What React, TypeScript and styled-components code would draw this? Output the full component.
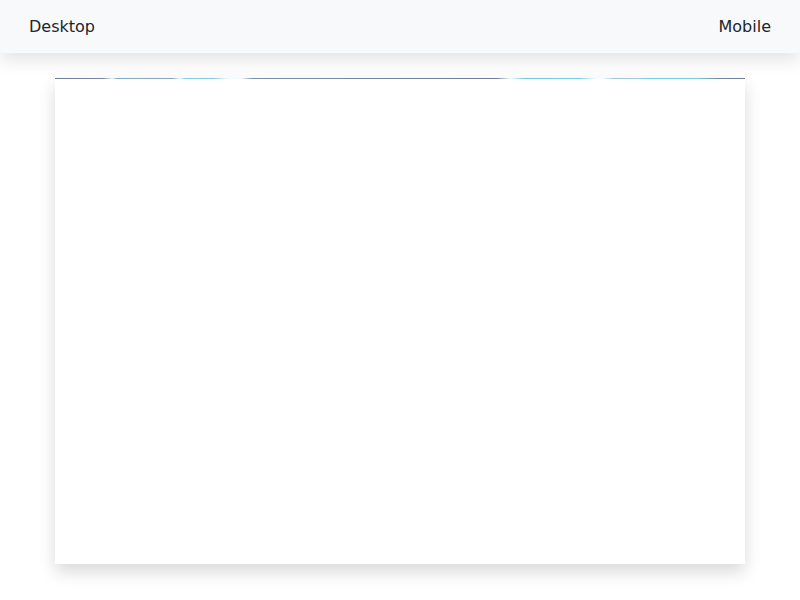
import { FC } from "react";
import styled, { createGlobalStyle } from "styled-components";

const GlobalStyle = createGlobalStyle`
    html, body {
        margin: 0;
        padding: 0;
        background: #ffffff;
        font-family: "DejaVu Sans", "Liberation Sans", sans-serif;
        color: #212529;
    }
`;

const Page = styled.div`
    display: flex;
    flex-direction: column;
    align-items: center;
    height: 600px;
    overflow: hidden;
`;

const TopBar = styled.header`
    position: relative;
    z-index: 1;
    align-self: stretch;
    flex: 0 0 53px;
    display: flex;
    justify-content: space-between;
    align-items: center;
    padding: 0 29px;
    background: #f8f9fa;
    box-shadow: 0 8px 16px rgba(0, 0, 0, 0.1);
`;

const ModeLink = styled.a`
    font-size: 16px;
    color: #212529;
    text-decoration: none;
    cursor: pointer;
`;

const Stage = styled.main`
    width: 690px;
    height: 486px;
    margin-top: 25px;
    background: #ffffff;
    box-shadow: 0 8px 16px rgba(0, 0, 0, 0.15);
    display: flex;
    flex-direction: column;
`;

const Scanline = styled.div`
    height: 1px;
    background: linear-gradient(
        90deg,
        #6f7d99 0%,
        #7a8aa6 7%,
        #e8f4fa 8.3%,
        #86a8c4 9%,
        #8aa6c0 17%,
        #e6f6fb 18%,
        #7fd0e6 19%,
        #8cc7dc 23%,
        #f4fafc 25%,
        #f7fbfd 27%,
        #7e92b0 28.5%,
        #7088a6 45%,
        #6f7d99 64%,
        #f2f8fb 66%,
        #7cc6dc 68%,
        #78d0e6 76%,
        #ffffff 78.5%,
        #f0f8fb 79.5%,
        #9fc4d8 81%,
        #a8cfe0 84%,
        #76cfe5 86%,
        #7ccbe0 93%,
        #7488a4 96%,
        #6f7d99 100%
    );
`;

const App: FC = () => {
    return (
        <>
            <GlobalStyle />
            <Page>
                <TopBar>
                    <ModeLink>Desktop</ModeLink>
                    <ModeLink>Mobile</ModeLink>
                </TopBar>
                <Stage>
                    <Scanline />
                </Stage>
            </Page>
        </>
    );
};

export default App;
